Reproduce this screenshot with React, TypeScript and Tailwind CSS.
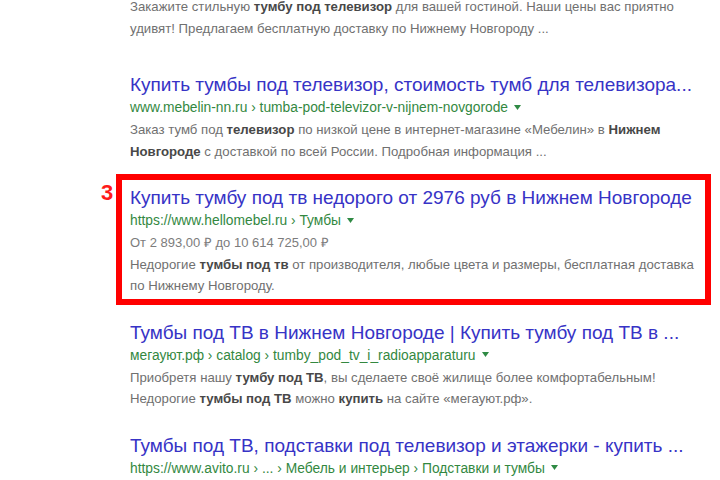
import React from 'react';

type Part = { t: string; b?: boolean };

interface ResultProps {
  title: string;
  url: string;
  price?: string;
  snippet: Part[][];
}

const Caret = () => (
  <svg width="7" height="5" viewBox="0 0 7 5" className="inline-block ml-[6px] mb-[2px]">
    <path d="M0 0 L7 0 L3.5 5 Z" fill="#2f8a44" />
  </svg>
);

const Snippet: React.FC<{ lines: Part[][] }> = ({ lines }) => (
  <div className="text-[13.2px] leading-[21.5px] text-[#707070]">
    {lines.map((line, i) => (
      <div key={i} className="whitespace-nowrap">
        {line.map((p, j) =>
          p.b ? (
            <b key={j} className="font-bold text-[#484848]">{p.t}</b>
          ) : (
            <span key={j}>{p.t}</span>
          )
        )}
      </div>
    ))}
  </div>
);

const Result: React.FC<ResultProps> = ({ title, url, price, snippet }) => (
  <div>
    <div className="text-[19px] leading-[22px] text-[#3733c6] whitespace-nowrap">{title}</div>
    <div className="text-[13.8px] leading-[23px] text-[#33883f] whitespace-nowrap">
      {url}
      <Caret />
    </div>
    {price && <div className="text-[13px] leading-[21.5px] text-[#7c7c7c]">{price}</div>}
    {snippet.length > 0 && <Snippet lines={snippet} />}
  </div>
);

export default function App() {
  return (
    <div
      className="w-[720px] h-[480px] overflow-hidden bg-white pl-[130px]"
      style={{ fontFamily: '"Liberation Sans", Arial, sans-serif' }}
    >
      {/* tail of previous result */}
      <div className="-mt-[4px]">
        <Snippet
          lines={[
            [
              { t: 'Закажите стильную ' },
              { t: 'тумбу под телевизор', b: true },
              { t: ' для вашей гостиной. Наши цены вас приятно' },
            ],
            [{ t: 'удивят! Предлагаем бесплатную доставку по Нижнему Новгороду ...' }],
          ]}
        />
      </div>

      <div className="mt-[35px]">
        <Result
          title="Купить тумбы под телевизор, стоимость тумб для телевизора..."
          url="www.mebelin-nn.ru › tumba-pod-televizor-v-nijnem-novgorode"
          snippet={[
            [
              { t: 'Заказ тумб под ' },
              { t: 'телевизор', b: true },
              { t: ' по низкой цене в интернет-магазине «Мебелин» в ' },
              { t: 'Нижнем', b: true },
            ],
            [
              { t: 'Новгороде', b: true },
              { t: ' с доставкой по всей России. Подробная информация ...' },
            ],
          ]}
        />
      </div>

      {/* highlighted result */}
      <div className="relative mt-[12px] -ml-[14px] w-[595px] border-[6px] border-[#ff0000] pl-[8px] pt-[7px] pb-[2px]">
        <span className="absolute -left-[21px] top-[0px] text-[22px] leading-[26px] font-bold text-[#ff1a1a]">3</span>
        <Result
          title="Купить тумбу под тв недорого от 2976 руб в Нижнем Новгороде"
          url="https://www.hellomebel.ru › Тумбы"
          price="От 2 893,00 ₽ до 10 614 725,00 ₽"
          snippet={[
            [
              { t: 'Недорогие ' },
              { t: 'тумбы под тв', b: true },
              { t: ' от производителя, любые цвета и размеры, бесплатная доставка' },
            ],
            [{ t: 'по Нижнему Новгороду.' }],
          ]}
        />
      </div>

      <div className="mt-[17px]">
        <Result
          title="Тумбы под ТВ в Нижнем Новгороде | Купить тумбу под ТВ в ..."
          url="мегауют.рф › catalog › tumby_pod_tv_i_radioapparaturu"
          snippet={[
            [
              { t: 'Приобретя нашу ' },
              { t: 'тумбу под ТВ', b: true },
              { t: ', вы сделаете своё жилище более комфортабельным!' },
            ],
            [
              { t: 'Недорогие ' },
              { t: 'тумбы под ТВ', b: true },
              { t: ' можно ' },
              { t: 'купить', b: true },
              { t: ' на сайте «мегауют.рф».' },
            ],
          ]}
        />
      </div>

      <div className="mt-[25px]">
        <Result
          title="Тумбы под ТВ, подставки под телевизор и этажерки - купить ..."
          url="https://www.avito.ru › ... › Мебель и интерьер › Подставки и тумбы"
          snippet={[]}
        />
      </div>
    </div>
  );
}
